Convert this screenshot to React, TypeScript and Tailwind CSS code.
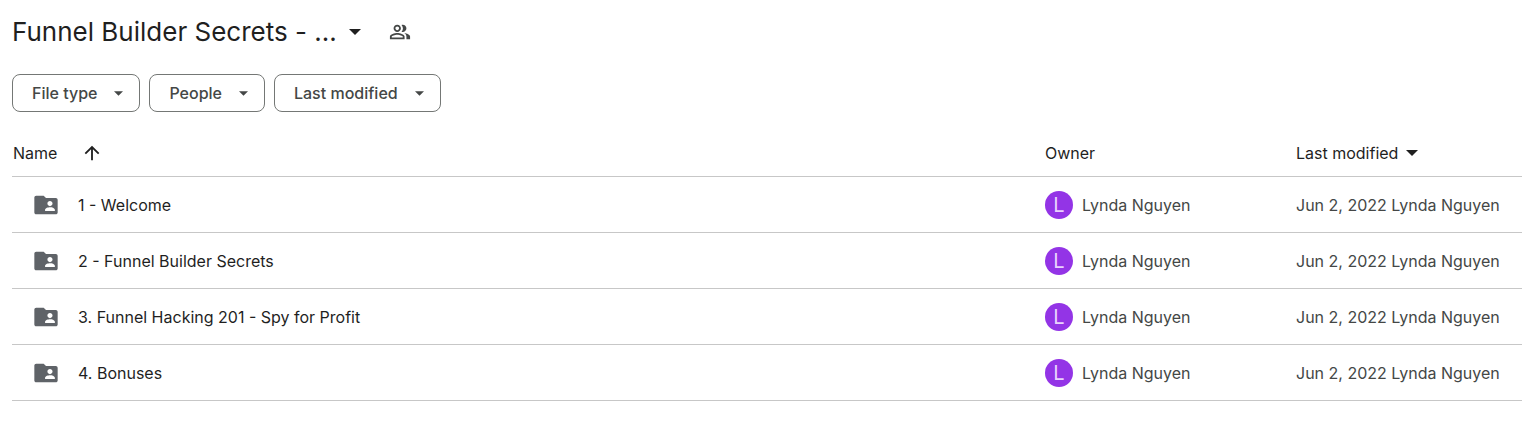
import React from 'react';

interface DriveItem {
  name: string;
  owner: string;
  modified: string;
}

const items: DriveItem[] = [
  { name: '1 - Welcome', owner: 'Lynda Nguyen', modified: 'Jun 2, 2022' },
  { name: '2 - Funnel Builder Secrets', owner: 'Lynda Nguyen', modified: 'Jun 2, 2022' },
  { name: '3. Funnel Hacking 201 - Spy for Profit', owner: 'Lynda Nguyen', modified: 'Jun 2, 2022' },
  { name: '4. Bonuses', owner: 'Lynda Nguyen', modified: 'Jun 2, 2022' },
];

const filters = ['File type', 'People', 'Last modified'];

const CaretDown: React.FC<{ className: string }> = ({ className }) => (
  <svg viewBox="0 0 10 5" className={`shrink-0 ${className}`} fill="currentColor" aria-hidden="true">
    <path d="M0 0h10L5 5z" />
  </svg>
);

const PeopleIcon: React.FC = () => (
  <svg viewBox="0 0 24 24" className="size-[22px]" fill="currentColor" aria-hidden="true">
    <path d="M16.67 13.13C18.04 14.06 19 15.32 19 17v3h4v-3c0-2.18-3.57-3.47-6.33-3.87z" />
    <path d="M15 12c2.21 0 4-1.79 4-4s-1.79-4-4-4c-.47 0-.91.1-1.33.24a5.98 5.98 0 0 1 0 7.52c.42.14.86.24 1.33.24z" />
    <path d="M9 12c2.21 0 4-1.79 4-4s-1.79-4-4-4-4 1.79-4 4 1.79 4 4 4zm0-6c1.1 0 2 .9 2 2s-.9 2-2 2-2-.9-2-2 .9-2 2-2z" />
    <path d="M9 13c-2.67 0-8 1.34-8 4v3h16v-3c0-2.66-5.33-4-8-4zm6 5H3v-.99C3.2 16.29 6.3 15 9 15s5.8 1.29 6 2v1z" />
  </svg>
);

const SharedFolderIcon: React.FC = () => (
  <svg viewBox="0 0 24 24" className="size-7 shrink-0 text-[#5f6368]" fill="currentColor" aria-hidden="true">
    <path d="M20.4 6H12l-2-2H3.6C2.7 4 2 4.7 2 5.6v12.8c0 .9.7 1.6 1.6 1.6h16.8c.9 0 1.6-.7 1.6-1.6V7.6c0-.9-.7-1.6-1.6-1.6zM15.4 8.6c1.2 0 2.2 1 2.2 2.2s-1 2.2-2.2 2.2-2.2-1-2.2-2.2 1-2.2 2.2-2.2zm4.2 8.6h-8.4v-1.1c0-1.4 2.8-2.1 4.2-2.1s4.2.7 4.2 2.1v1.1z" />
  </svg>
);

const ArrowUpIcon: React.FC = () => (
  <svg viewBox="0 0 24 24" className="size-[22px]" fill="currentColor" aria-hidden="true">
    <path d="M4 12l1.41 1.41L11 7.83V20h2V7.83l5.58 5.59L20 12l-8-8-8 8z" />
  </svg>
);

const App: React.FC = () => {
  return (
    <main className="bg-white pl-3 text-base text-[#1f1f1f] font-[Inter,'Liberation_Sans',sans-serif]">
      <header className="flex h-16 items-center gap-7">
        <h1 className="text-[26px] leading-8">
          <button type="button" className="flex items-center gap-3">
            Funnel Builder Secrets - ...
            <CaretDown className="h-1.5 w-3" />
          </button>
        </h1>
        <button type="button" aria-label="Manage access" className="text-[#444746]">
          <PeopleIcon />
        </button>
      </header>

      <div className="flex gap-[9px] pt-[10px]">
        {filters.map((label) => (
          <button
            key={label}
            type="button"
            className="flex h-[38px] items-center gap-[17px] rounded-lg border border-[#747775] pr-4 pl-[19px] font-medium text-[#444746]"
          >
            {label}
            <CaretDown className="h-[5px] w-[9px]" />
          </button>
        ))}
      </div>

      <table className="mt-[18px] w-full table-fixed border-separate border-spacing-0 text-left [&_td]:border-b [&_td]:border-[#c7c7c7] [&_th]:border-b [&_th]:border-[#c7c7c7]">
        <thead>
          <tr className="h-[47px]">
            <th className="p-0 pl-px font-normal">
              <button type="button" className="flex items-center gap-6">
                Name
                <ArrowUpIcon />
              </button>
            </th>
            <th className="w-[251px] p-0 font-normal">Owner</th>
            <th className="w-[226px] p-0 font-normal">
              <button type="button" className="flex items-center gap-2">
                Last modified
                <CaretDown className="h-1.5 w-3" />
              </button>
            </th>
          </tr>
        </thead>
        <tbody>
          {items.map((item) => (
            <tr key={item.name} className="h-14">
              <td className="p-0">
                <div className="flex items-center gap-[18px] pl-5">
                  <SharedFolderIcon />
                  {item.name}
                </div>
              </td>
              <td className="p-0 text-[#444746]">
                <div className="flex items-center gap-[9px]">
                  <span className="flex size-7 items-center justify-center rounded-full bg-[#9334e6] text-xl text-[#e9d2fd]">
                    {item.owner[0]}
                  </span>
                  {item.owner}
                </div>
              </td>
              <td className="p-0 whitespace-nowrap text-[#444746]">
                {item.modified} {item.owner}
              </td>
            </tr>
          ))}
        </tbody>
      </table>
    </main>
  );
};

export default App;
